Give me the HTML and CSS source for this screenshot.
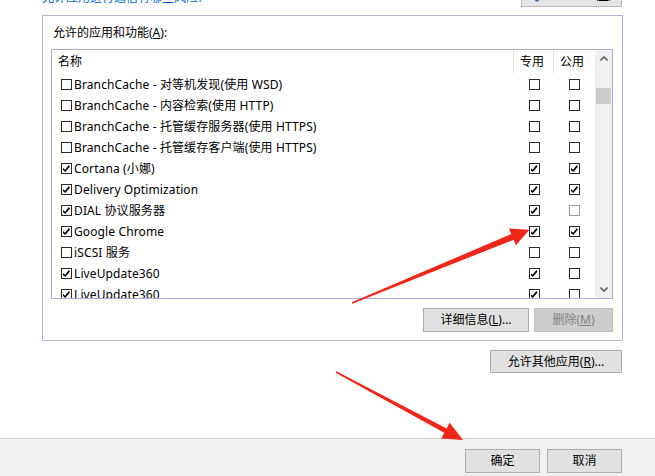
FILE: index.html
```html
<!DOCTYPE html>
<html lang="zh-CN">
<head>
<meta charset="utf-8">
<title>允许的应用</title>
<link rel="stylesheet" href="styles.css">
</head>
<body>
<div class="page">
  <div class="topbar">
    <span class="risk-link">允许应用进行通信有哪些风险?</span>
    <button class="btn top-btn">
      <svg class="shield" width="12" height="14" viewBox="0 0 12 14"><path d="M6 0.5 L11 2.5 V7 C11 10 8.5 12.3 6 13.5 C3.5 12.3 1 10 1 7 V2.5 Z" fill="#f2c531" stroke="#7a7a7a" stroke-width="0.8"/><path d="M6 0.5 V13.5 C8.5 12.3 11 10 11 7 H1 C1 10 3.5 12.3 6 13.5" fill="#2f74c9"/></svg>
      <span>更改设置(<u>N</u>)</span>
    </button>
  </div>

  <div class="groupbox">
    <div class="gb-label">允许的应用和功能(<u>A</u>):</div>
    <div class="listview">
      <div class="lv-main">
        <div class="lv-header">
          <div class="hcell">名称</div>
          <div class="hcell">专用</div>
          <div class="hcell last">公用</div>
        </div>
        <div class="lv-row"><div class="name-cell"><span class="cb"></span><span>BranchCache - 对等机发现(使用 WSD)</span></div><div class="cell-c"><span class="cb"></span></div><div class="cell-c"><span class="cb"></span></div></div>
        <div class="lv-row"><div class="name-cell"><span class="cb"></span><span>BranchCache - 内容检索(使用 HTTP)</span></div><div class="cell-c"><span class="cb"></span></div><div class="cell-c"><span class="cb"></span></div></div>
        <div class="lv-row"><div class="name-cell"><span class="cb"></span><span>BranchCache - 托管缓存服务器(使用 HTTPS)</span></div><div class="cell-c"><span class="cb"></span></div><div class="cell-c"><span class="cb"></span></div></div>
        <div class="lv-row"><div class="name-cell"><span class="cb"></span><span>BranchCache - 托管缓存客户端(使用 HTTPS)</span></div><div class="cell-c"><span class="cb"></span></div><div class="cell-c"><span class="cb"></span></div></div>
        <div class="lv-row"><div class="name-cell"><span class="cb on"></span><span>Cortana (小娜)</span></div><div class="cell-c"><span class="cb on"></span></div><div class="cell-c"><span class="cb on"></span></div></div>
        <div class="lv-row"><div class="name-cell"><span class="cb on"></span><span>Delivery Optimization</span></div><div class="cell-c"><span class="cb on"></span></div><div class="cell-c"><span class="cb on"></span></div></div>
        <div class="lv-row"><div class="name-cell"><span class="cb on"></span><span>DIAL 协议服务器</span></div><div class="cell-c"><span class="cb on"></span></div><div class="cell-c"><span class="cb dis"></span></div></div>
        <div class="lv-row"><div class="name-cell"><span class="cb on"></span><span>Google Chrome</span></div><div class="cell-c"><span class="cb on"></span></div><div class="cell-c"><span class="cb on"></span></div></div>
        <div class="lv-row"><div class="name-cell"><span class="cb"></span><span>iSCSI 服务</span></div><div class="cell-c"><span class="cb"></span></div><div class="cell-c"><span class="cb"></span></div></div>
        <div class="lv-row"><div class="name-cell"><span class="cb on"></span><span>LiveUpdate360</span></div><div class="cell-c"><span class="cb on"></span></div><div class="cell-c"><span class="cb"></span></div></div>
        <div class="lv-row"><div class="name-cell"><span class="cb on"></span><span>LiveUpdate360</span></div><div class="cell-c"><span class="cb on"></span></div><div class="cell-c"><span class="cb"></span></div></div>
      </div>
      <div class="scrollbar">
        <div class="sb-btn"><svg width="8" height="5" viewBox="0 0 8 5"><path d="M0.5 4.5 L4 1 L7.5 4.5" fill="none" stroke="#606060" stroke-width="1.6"/></svg></div>
        <div class="sb-track"><div class="sb-thumb"></div></div>
        <div class="sb-btn"><svg width="8" height="5" viewBox="0 0 8 5"><path d="M0.5 0.5 L4 4 L7.5 0.5" fill="none" stroke="#606060" stroke-width="1.6"/></svg></div>
      </div>
    </div>
    <div class="gb-buttons">
      <button class="btn btn-details">详细信息(<u>L</u>)...</button>
      <button class="btn btn-remove" disabled>删除(<u>M</u>)</button>
    </div>
  </div>

  <div class="other-row">
    <button class="btn btn-other">允许其他应用(<u>R</u>)...</button>
  </div>

  <div class="footer">
    <button class="btn btn-foot">确定</button>
    <button class="btn btn-foot">取消</button>
  </div>
</div>

<svg class="arrows" width="655" height="476" viewBox="0 0 655 476">
  <polygon points="351.7,302.2 511.2,234.1 509,228.6 529.5,229.8 515.9,245.2 513.6,239.7 352.3,303.8" fill="#f1261b"/>
  <polygon points="336.4,371.3 446.6,428.4 449.6,422.7 463,440 441.2,438.5 444.2,432.8 335.6,372.7" fill="#f1261b"/>
</svg>
</body>
</html>
```

FILE: styles.css
```css
* { box-sizing: border-box; }

html, body {
  margin: 0;
  padding: 0;
}

body {
  width: 655px;
  height: 476px;
  overflow: hidden;
  position: relative;
  background: #ffffff;
  color: #000000;
  font-family: "Noto Sans", "Noto Sans CJK SC", sans-serif;
  font-size: 12px;
  line-height: 16px;
}

.page {
  display: flex;
  flex-direction: column;
  height: 476px;
}

/* top strip (mostly scrolled out) */
.topbar {
  height: 7px;
  overflow: hidden;
  display: flex;
  justify-content: space-between;
  align-items: flex-start;
  padding: 0 33px 0 42px;
}

.risk-link {
  color: #0066cc;
  margin-top: -10px;
  white-space: nowrap;
}

.btn {
  font-family: inherit;
  font-size: 12px;
  line-height: 16px;
  color: #000000;
  background: #e1e1e1;
  border: 1px solid #adadad;
  padding: 0;
  margin: 0;
  display: flex;
  align-items: center;
  justify-content: center;
  white-space: nowrap;
}

.top-btn {
  width: 101px;
  height: 24px;
  margin-top: -17px;
  gap: 4px;
  background: #e5e5e5;
  border-color: #b9b9b9;
}

.shield { flex: none; }

/* group box */
.groupbox {
  margin: 8px 0 0 42px;
  width: 581px;
  height: 326px;
  border: 1px solid #b3b5dc;
  padding: 9px 9px 8px 8px;
  display: flex;
  flex-direction: column;
}

.gb-label {
  padding-left: 2px;
  height: 16px;
}

.listview {
  margin-top: 8px;
  height: 250px;
  border: 1px solid #aaacd6;
  display: flex;
  overflow: hidden;
}

.lv-main {
  flex: 1;
  overflow: hidden;
}

.lv-header,
.lv-row {
  display: grid;
  grid-template-columns: 462px 40px 41px;
}

.lv-header {
  height: 24px;
}

.hcell {
  line-height: 24px;
  padding-left: 6px;
  border-right: 1px solid #e5e5e5;
  white-space: nowrap;
}

.hcell.last { border-right: none; }

.lv-row {
  height: 21px;
  align-items: center;
}

.name-cell {
  display: flex;
  align-items: center;
  gap: 2px;
  padding-left: 9px;
  white-space: nowrap;
  letter-spacing: 0.12px;
}

.cell-c {
  display: flex;
  justify-content: center;
}

.cb {
  width: 11px;
  height: 11px;
  border: 1px solid #2a2a2a;
  background: #ffffff;
  position: relative;
  flex: none;
}

.cb.dis {
  border-color: #a0a0a0;
}

.cb.on::after {
  content: "";
  position: absolute;
  left: 1px;
  top: 1px;
  width: 7px;
  height: 7px;
  background: #000000;
  clip-path: polygon(0% 42%, 30% 68%, 84% 0%, 100% 20%, 32% 100%, 0% 70%);
}

/* scrollbar */
.scrollbar {
  width: 17px;
  flex: none;
  background: #f0f0f0;
  display: flex;
  flex-direction: column;
}

.sb-btn {
  height: 17px;
  flex: none;
  display: flex;
  align-items: center;
  justify-content: center;
}

.sb-track {
  flex: 1;
  padding: 21px 1px 0 1px;
}

.sb-thumb {
  height: 16px;
  background: #cdcdcd;
}

/* group box buttons */
.gb-buttons {
  margin-top: 9px;
  display: flex;
  justify-content: flex-end;
  gap: 5px;
}

.btn-details {
  width: 106px;
  height: 24px;
}

.btn-remove {
  width: 79px;
  height: 24px;
  background: #cccccc;
  border-color: #bfbfbf;
  color: #838383;
}

.other-row {
  margin-top: 9px;
  display: flex;
  justify-content: flex-end;
  padding-right: 33px;
}

.btn-other {
  width: 132px;
  height: 23px;
}

/* footer */
.footer {
  margin-top: auto;
  height: 38px;
  background: #f0f0f0;
  border-top: 1px solid #cfcfcf;
  padding: 10px 33px 3px 0;
  display: flex;
  justify-content: flex-end;
  align-items: flex-start;
  gap: 7px;
}

.btn-foot {
  width: 75px;
  height: 24px;
}

/* annotation arrows overlay */
.arrows {
  position: absolute;
  left: 0;
  top: 0;
  pointer-events: none;
}
```
